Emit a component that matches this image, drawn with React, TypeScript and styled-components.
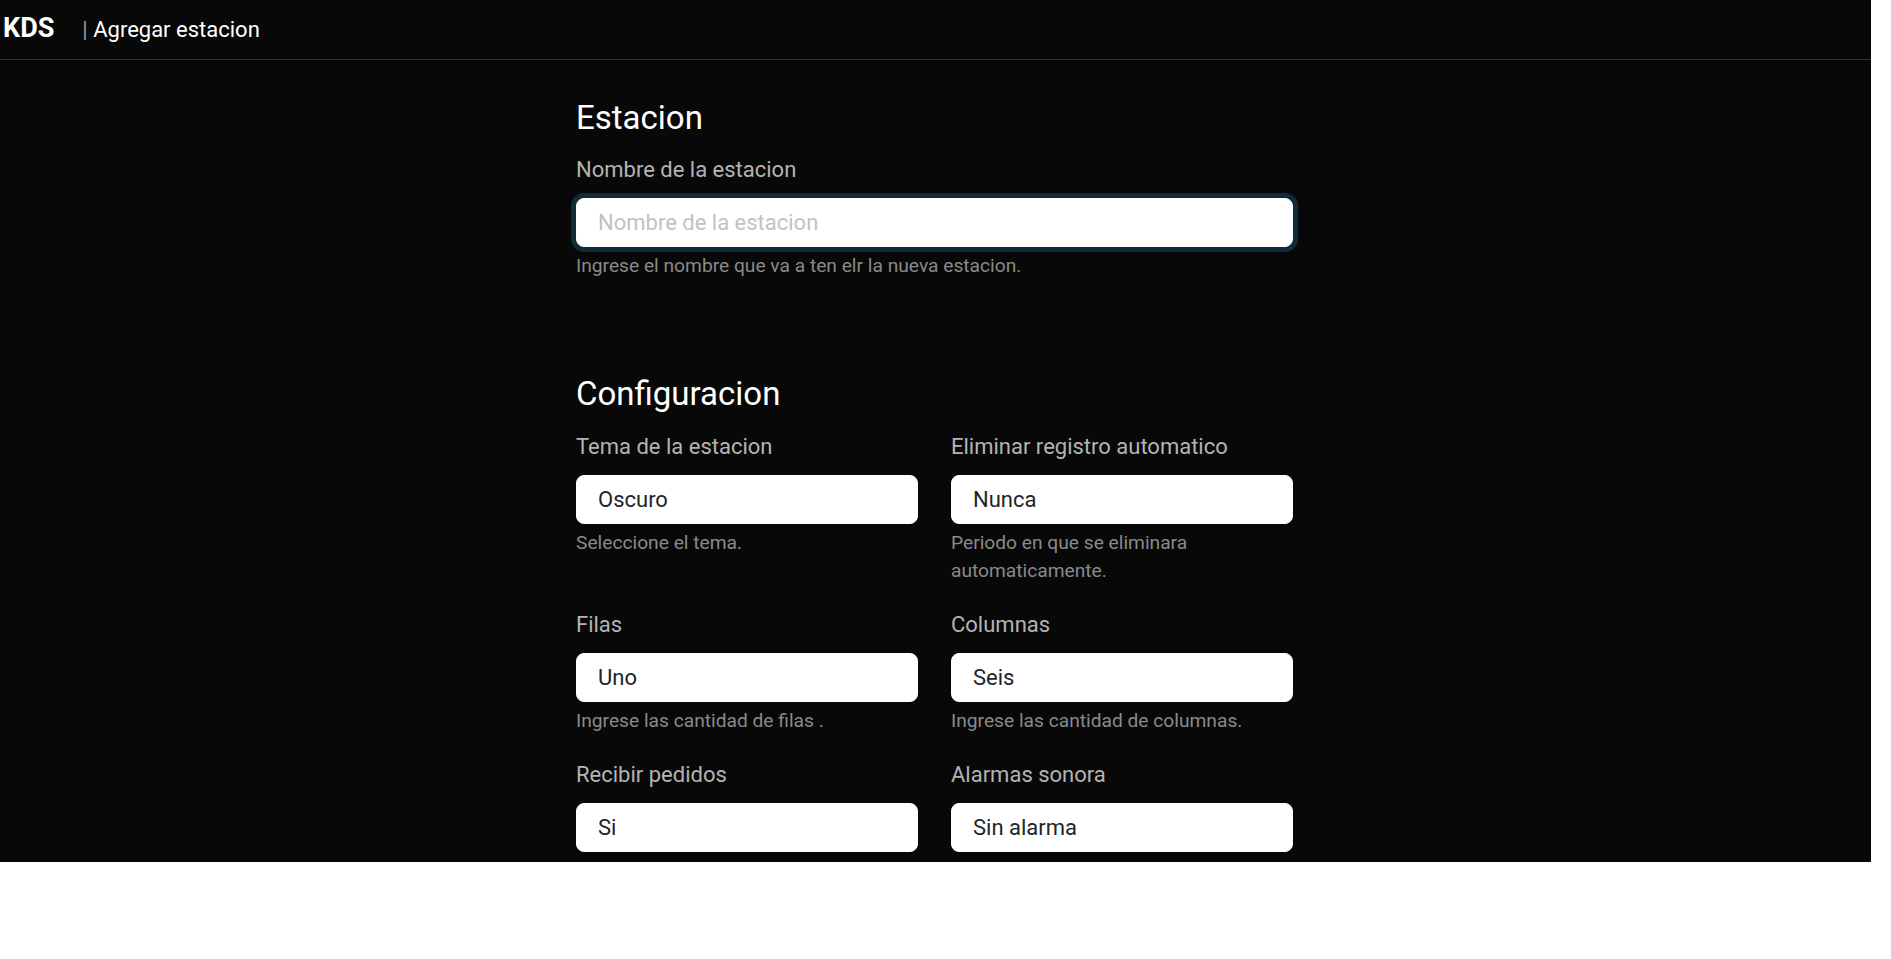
import React, { useEffect, useRef } from "react";
import styled, { createGlobalStyle } from "styled-components";

const Global = createGlobalStyle`
  html, body { margin: 0; padding: 0; background: #ffffff; }
  * { box-sizing: border-box; }
  body { font-family: Roboto, "Liberation Sans", Arial, sans-serif; }
`;

const Screen = styled.div`
  width: 1871px;
  height: 862px;
  background: #080808;
  overflow: hidden;
  display: flex;
  flex-direction: column;
`;

const TopBar = styled.header`
  height: 60px;
  flex: 0 0 60px;
  border-bottom: 1px solid #2e2e2e;
  display: flex;
  align-items: baseline;
  padding: 15px 0 0 3px;
`;

const Brand = styled.span`
  font-size: 27px;
  line-height: 1;
  font-weight: 700;
  color: #ffffff;
`;

const Crumb = styled.span`
  margin-left: 28px;
  font-size: 22px;
  line-height: 1;
  color: #ffffff;
`;

const Pipe = styled.span`
  color: #9a9a9a;
`;

const Main = styled.main`
  flex: 1;
  padding: 39px 2px 0 0;
`;

const Form = styled.form`
  width: 717px;
  margin: 0 auto;
`;

const Section = styled.section<{ $gapTop?: number }>`
  margin-top: ${(p) => p.$gapTop ?? 0}px;
`;

const Heading = styled.h2`
  margin: 0 0 16px;
  font-size: 33px;
  line-height: 38.4px;
  font-weight: 400;
  color: #ffffff;
`;

const Grid = styled.div`
  display: grid;
  grid-template-columns: 1fr 1fr;
  column-gap: 33px;
  row-gap: 22px;
  align-items: start;
`;

const Field = styled.div`
  display: flex;
  flex-direction: column;
`;

const Label = styled.label`
  font-size: 22px;
  line-height: 33px;
  color: #b4b4b4;
  margin-bottom: 12px;
`;

const TextInput = styled.input<{ $focused?: boolean }>`
  height: 49px;
  width: 100%;
  border: 1px solid #ffffff;
  border-radius: 8px;
  background: #ffffff;
  padding: 0 21px;
  font-family: Roboto, "Liberation Sans", Arial, sans-serif;
  font-size: 22px;
  color: #212529;
  caret-color: #212529;
  outline: none;
  box-shadow: ${(p) => (p.$focused ? "0 0 0 5px #112b38" : "none")};
  &::placeholder { color: #c2c2c2; }
`;

const Select = styled.select`
  height: 49px;
  width: 100%;
  border: 1px solid #ffffff;
  border-radius: 8px;
  background: #ffffff;
  padding: 0 21px;
  font-family: Roboto, "Liberation Sans", Arial, sans-serif;
  font-size: 22px;
  color: #212529;
  appearance: none;
  -webkit-appearance: none;
  outline: none;
`;

const Help = styled.div`
  margin-top: 5px;
  font-size: 19.2px;
  line-height: 28.8px;
  color: #8a8a8a;
`;

type Opt = { label: string; help: string; value: string; options: string[] };

const config: Opt[] = [
  { label: "Tema de la estacion", help: "Seleccione el tema.", value: "Oscuro", options: ["Oscuro", "Claro"] },
  { label: "Eliminar registro automatico", help: "Periodo en que se eliminara automaticamente.", value: "Nunca", options: ["Nunca", "Diario", "Semanal"] },
  { label: "Filas", help: "Ingrese las cantidad de filas .", value: "Uno", options: ["Uno", "Dos", "Tres"] },
  { label: "Columnas", help: "Ingrese las cantidad de columnas.", value: "Seis", options: ["Cuatro", "Cinco", "Seis"] },
  { label: "Recibir pedidos", help: "", value: "Si", options: ["Si", "No"] },
  { label: "Alarmas sonora", help: "", value: "Sin alarma", options: ["Sin alarma", "Campana"] },
];

export default function App() {
  const nameRef = useRef<HTMLInputElement>(null);
  useEffect(() => {
    nameRef.current?.focus();
  }, []);

  return (
    <>
      <Global />
      <Screen>
        <TopBar>
          <Brand>KDS</Brand>
          <Crumb>
            <Pipe>|</Pipe> Agregar estacion
          </Crumb>
        </TopBar>
        <Main>
          <Form onSubmit={(e) => e.preventDefault()}>
            <Section>
              <Heading>Estacion</Heading>
              <Field>
                <Label htmlFor="nombre">Nombre de la estacion</Label>
                <TextInput ref={nameRef} id="nombre" $focused autoFocus placeholder="Nombre de la estacion" />
                <Help>Ingrese el nombre que va a ten elr la nueva estacion.</Help>
              </Field>
            </Section>
            <Section $gapTop={94}>
              <Heading>Configuracion</Heading>
              <Grid>
                {config.map((c, i) => (
                  <Field key={c.label}>
                    <Label htmlFor={`cfg-${i}`}>{c.label}</Label>
                    <Select id={`cfg-${i}`} defaultValue={c.value}>
                      {c.options.map((o) => (
                        <option key={o} value={o}>{o}</option>
                      ))}
                    </Select>
                    {c.help && <Help>{c.help}</Help>}
                  </Field>
                ))}
              </Grid>
            </Section>
          </Form>
        </Main>
      </Screen>
    </>
  );
}
